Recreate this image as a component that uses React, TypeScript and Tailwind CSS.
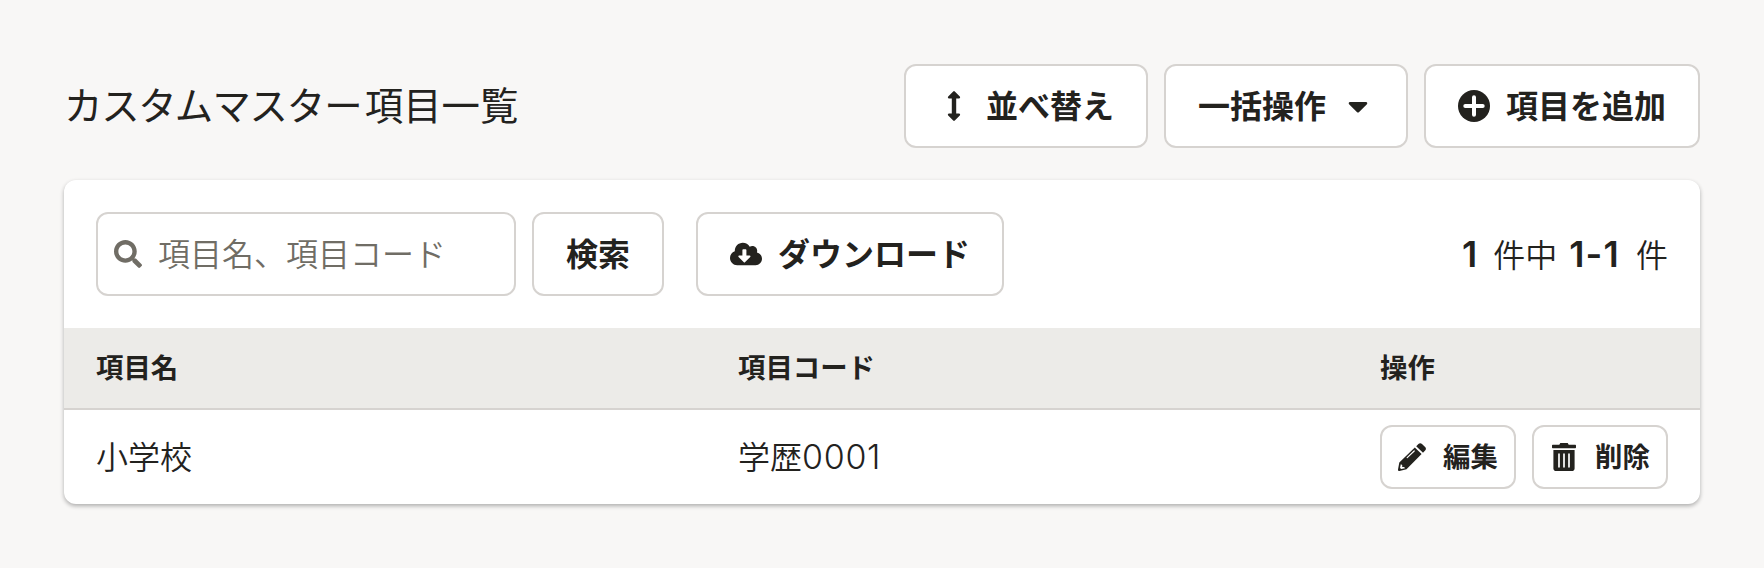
import type { ReactNode } from "react";
import { FaCaretDown, FaCloudDownloadAlt, FaSearch } from "react-icons/fa";

function Button({ className, children }: { className: string; children: ReactNode }) {
  return (
    <button
      className={`flex shrink-0 items-center rounded-xl border-2 border-[#d6d3d0] bg-white font-bold whitespace-nowrap ${className}`}
    >
      {children}
    </button>
  );
}

function SortIcon() {
  return (
    <svg viewBox="0 0 32 32" className="size-8" fill="currentColor" aria-hidden="true">
      <path d="M15.2 1.400a1.100 1.100 0 0 1 1.600 0l5 5.200c.7.8.3 2-.8 2h-2.800v14.800H21c1.100 0 1.500 1.200.8 2l-5 5.200a1.100 1.100 0 0 1-1.600 0l-5-5.200c-.7-.8-.3-2 .8-2h2.800V8.600H11c-1.100 0-1.500-1.200-.8-2z" />
    </svg>
  );
}

function PlusCircleIcon() {
  return (
    <svg viewBox="0 0 32 32" className="size-8" aria-hidden="true">
      <circle cx="16" cy="16" r="16" fill="currentColor" />
      <path d="M16 7.300v17.400M7.300 16h17.400" stroke="#fff" strokeWidth="4" strokeLinecap="round" />
    </svg>
  );
}

function PencilIcon() {
  return (
    <svg viewBox="0 0 28 28" className="size-7" aria-hidden="true">
      <path
        fill="currentColor"
        d="M16.800 4.600 23.600 11 8.500 26.200 1.500 28C.5 28.200-.1 27.500 0 26.600L1.300 19.600zM18.200 3.200l2.200-2.200c1.100-1.100 2.500-1.100 3.600 0l3.100 3c1.100 1.100 1.100 2.500 0 3.600l-2.100 2.200z"
      />
      <path fill="#fff" d="M2.800 21.300 4.200 22v2h2l.8 1.300-3.800.8-1.200-1.200z" />
      <path d="m9.200 14.600 7-6.600" stroke="#fff" strokeWidth="1.200" strokeLinecap="round" />
    </svg>
  );
}

function TrashIcon() {
  return (
    <svg viewBox="0 0 28 28" className="size-7" aria-hidden="true">
      <path
        fill="currentColor"
        d="M10.300 0h7.400l1 1.800h6.300c.6 0 1 .4 1 1v1.400c0 .6-.4 1-1 1H3c-.6 0-1-.4-1-1V2.800c0-.6.4-1 1-1h6.300zM3.400 7h21.200v18.400c0 1.500-1.100 2.600-2.600 2.600H6c-1.500 0-2.600-1.100-2.600-2.600z"
      />
      <path d="M9 11.200v12.600M14 11.200v12.600M19 11.200v12.600" stroke="#fff" strokeWidth="1.700" strokeLinecap="round" />
    </svg>
  );
}

export default function App() {
  return (
    <div className="h-[568px] w-[1764px] bg-[#f8f7f6] px-16 pt-16 font-['Noto_Sans_CJK_JP',sans-serif] text-[32px] leading-none text-[#23221e]">
      <header className="flex h-[84px] items-center justify-between">
        <h1 className="pb-1.5 pl-px text-[38.4px] font-normal [font-feature-settings:'palt']">
          <span className="tracking-[2.5px]">カスタムマスター</span>項目一覧
        </h1>
        <div className="flex gap-4">
          <Button className="h-[84px] w-[244px] gap-4 pl-8">
            <SortIcon />
            <span className="pb-[5px]">並べ替え</span>
          </Button>
          <Button className="h-[84px] w-[244px] gap-4 pl-8">
            <span className="pb-[5px]">一括操作</span>
            <FaCaretDown className="size-8" />
          </Button>
          <Button className="h-[84px] w-[276px] gap-4 pl-8">
            <PlusCircleIcon />
            <span className="pb-[5px]">項目を追加</span>
          </Button>
        </div>
      </header>

      <main className="mt-8 h-[324px] overflow-hidden rounded-xl bg-white shadow-[0_2px_4px_rgba(3,3,2,0.3)]">
        <div className="flex h-[148px] items-center px-8">
          <label className="flex h-[84px] w-[420px] items-center gap-4 rounded-xl border-2 border-[#d6d3d0] pl-4 text-[#706d65]">
            <FaSearch className="size-7" />
            <span className="pb-[5px] font-[350]">項目名、項目コード</span>
          </label>
          <Button className="ml-4 h-[84px] w-[132px] justify-center pb-[5px]">検索</Button>
          <Button className="ml-8 h-[84px] w-[308px] gap-4 pl-8">
            <FaCloudDownloadAlt className="size-8" />
            <span className="pb-[5px]">ダウンロード</span>
          </Button>
          <p className="ml-auto flex items-baseline font-[350]">
            <b className="mr-4 font-['Inter',sans-serif] text-[36px] font-semibold">1</b>
            <span>件中</span>
            <b className="mr-4 ml-3 font-['Inter',sans-serif] text-[36px] font-semibold tracking-[1.2px]">1-1</b>
            <span>件</span>
          </p>
        </div>
        <table className="w-full table-fixed border-separate border-spacing-0 text-left">
          <colgroup>
            <col className="w-[642px]" />
            <col className="w-[642px]" />
            <col />
          </colgroup>
          <thead>
            <tr className="bg-[#ecebe8] text-[27.4px]">
              <th className="h-[82px] border-b-2 border-[#d6d3d0] pt-0 pb-0.5 pl-8">項目名</th>
              <th className="h-[82px] border-b-2 border-[#d6d3d0] pt-0 pb-0.5 pl-8">項目コード</th>
              <th className="h-[82px] border-b-2 border-[#d6d3d0] pt-0 pb-0.5 pl-8">操作</th>
            </tr>
          </thead>
          <tbody>
            <tr className="h-[94px] font-[350]">
              <td className="pb-[5px] pl-8">小学校</td>
              <td className="pb-[2px] pl-8">
                学歴<span className="font-['Inter',sans-serif] text-[34px] font-light tracking-[0.7px]">0001</span>
              </td>
              <td className="pl-8 text-[27.4px]">
                <div className="flex gap-4">
                  <Button className="h-16 w-[136px] gap-[17px] pl-4">
                    <PencilIcon />
                    <span className="pb-[3px]">編集</span>
                  </Button>
                  <Button className="h-16 w-[136px] gap-[17px] pl-4">
                    <TrashIcon />
                    <span className="pb-[3px]">削除</span>
                  </Button>
                </div>
              </td>
            </tr>
          </tbody>
        </table>
      </main>
    </div>
  );
}
